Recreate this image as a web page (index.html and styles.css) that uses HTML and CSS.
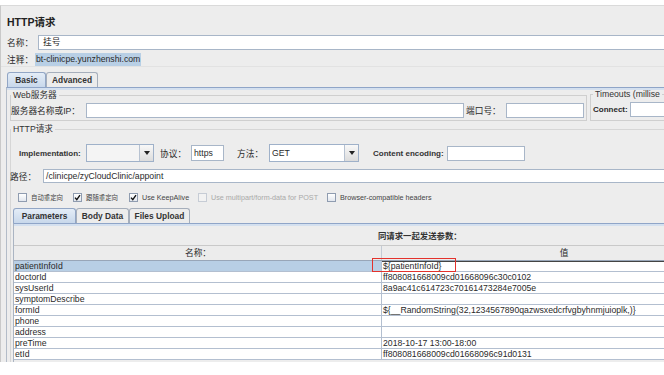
FILE: index.html
```html
<!DOCTYPE html>
<html lang="zh">
<head>
    <meta charset="UTF-8">
    <title>HTTP请求</title>
    <link rel="stylesheet" href="styles.css">
</head>
<body>
<div class="window">

    <div class="title">HTTP请求</div>

    <!-- Name / comment -->

    <div class="name-row">
        <span class="row-label">名称：</span>
        <div class="field name-field">挂号</div>
    </div>
    <div class="comment-row">
        <span class="row-label">注释：</span>
        <span class="selected-text">bt-clinicpe.yunzhenshi.com</span>
    </div>

    <!-- Tabs -->

    <div class="tabs">
        <div class="tab active basic-tab">Basic</div>
        <div class="tab advanced-tab">Advanced</div>
    </div>

    <div class="tab-panel">

        <div class="server-line">
            <fieldset class="group web-group">
                <legend>Web服务器</legend>
                <div class="server-row">
                    <span class="server-label">服务器名称或IP：</span>
                    <div class="field server-field"></div>
                    <span class="port-label">端口号：</span>
                    <div class="field port-field"></div>
                </div>
            </fieldset>

            <fieldset class="group timeout-group">
                <legend>Timeouts (millise</legend>
                <div class="server-row">
                    <span class="connect-label">Connect:</span>
                    <div class="field connect-field"></div>
                </div>
            </fieldset>
        </div>

        <fieldset class="group http-group">
            <legend>HTTP请求</legend>

            <div class="impl-row">
                <span class="bold-label impl-label">Implementation:</span>
                <div class="combo impl-combo">
                    <span class="combo-value"></span>
                    <span class="combo-button"><span class="arrow"></span></span>
                </div>
                <span class="proto-label">协议：</span>
                <div class="field proto-field">https</div>
                <span class="method-label">方法：</span>
                <div class="combo method-combo">
                    <span class="combo-value">GET</span>
                    <span class="combo-button"><span class="arrow"></span></span>
                </div>
                <span class="bold-label encoding-label">Content encoding:</span>
                <div class="field encoding-field"></div>
            </div>

            <div class="path-row">
                <span class="path-label">路径：</span>
                <div class="field path-field">/clinicpe/zyCloudClinic/appoint</div>
            </div>

            <!-- Options -->

            <div class="check-row">
                <div class="check check-1">
                    <span class="box"></span>
                    <span class="check-text cjk-small">自动重定向</span>
                </div>
                <div class="check check-2">
                    <span class="box"><svg width="7" height="7" viewBox="0 0 7 7"><path d="M1 3.6 L2.8 5.6 L6 1.2" fill="none" stroke="#111" stroke-width="1.4"/></svg></span>
                    <span class="check-text cjk-small">跟随重定向</span>
                </div>
                <div class="check check-3">
                    <span class="box"><svg width="7" height="7" viewBox="0 0 7 7"><path d="M1 3.6 L2.8 5.6 L6 1.2" fill="none" stroke="#111" stroke-width="1.4"/></svg></span>
                    <span class="check-text">Use KeepAlive</span>
                </div>
                <div class="check check-4 disabled">
                    <span class="box"></span>
                    <span class="check-text">Use multipart/form-data for POST</span>
                </div>
                <div class="check check-5">
                    <span class="box"></span>
                    <span class="check-text">Browser-compatible headers</span>
                </div>
            </div>

            <!-- Sub tabs -->

            <div class="tabs sub-tabs">
                <div class="tab active params-tab">Parameters</div>
                <div class="tab body-tab">Body Data</div>
                <div class="tab files-tab">Files Upload</div>
            </div>

            <div class="sub-panel">
                <div class="caption">同请求一起发送参数：</div>

                <div class="param-table">
                    <div class="param-head">
                        <div class="name-cell">名称：</div>
                        <div class="value-cell">值</div>
                    </div>
                    <div class="param-row selected">
                        <div class="name-cell">patientInfoId</div>
                        <div class="value-cell editing">${patientInfoId}</div>
                        <div class="mark"></div>
                    </div>
                    <div class="param-row">
                        <div class="name-cell">doctorId</div>
                        <div class="value-cell">ff808081668009cd01668096c30c0102</div>
                    </div>
                    <div class="param-row">
                        <div class="name-cell">sysUserId</div>
                        <div class="value-cell">8a9ac41c614723c70161473284e7005e</div>
                    </div>
                    <div class="param-row">
                        <div class="name-cell">symptomDescribe</div>
                        <div class="value-cell"></div>
                    </div>
                    <div class="param-row">
                        <div class="name-cell">formId</div>
                        <div class="value-cell">${__RandomString(32,1234567890qazwsxedcrfvgbyhnmjuioplk,)}</div>
                    </div>
                    <div class="param-row">
                        <div class="name-cell">phone</div>
                        <div class="value-cell"></div>
                    </div>
                    <div class="param-row">
                        <div class="name-cell">address</div>
                        <div class="value-cell"></div>
                    </div>
                    <div class="param-row">
                        <div class="name-cell">preTime</div>
                        <div class="value-cell">2018-10-17 13:00-18:00</div>
                    </div>
                    <div class="param-row">
                        <div class="name-cell">etId</div>
                        <div class="value-cell">ff808081668009cd01668096c91d0131</div>
                    </div>
                </div>
            </div>
        </fieldset>
    </div>
</div>
</body>
</html>
```

FILE: styles.css
```css
*{
    margin: 0;
    padding: 0;
    box-sizing: border-box;
}

body{
    width: 664px;
    height: 375px;
    overflow: hidden;
    background: #fff;
    font-family: "Liberation Sans", Arial, "Noto Sans CJK SC", sans-serif;
    font-size: 8.7px;
    color: #2a2a2a;
}

.window{
    margin-top: 5px;
    width: 800px;
    height: 357px;
    background: #ededed;
    border-top: 1px solid #dadada;
    border-left: 1px solid #c9c9c9;
    overflow: hidden;
}

.title{
    height: 28px;
    padding: 4px 0 0 6px;
    line-height: 24px;
    font-size: 10.5px;
    font-weight: bold;
    color: #222;
}

.field{
    height: 15px;
    background: #fff;
    border: 1px solid #a8b6c8;
    line-height: 13px;
    padding-left: 2px;
    white-space: nowrap;
    overflow: hidden;
}

/* name + comment */

.name-row{
    display: flex;
    align-items: center;
    margin-top: 1px;
    padding-left: 6px;
}

.row-label{
    width: 31px;
    flex-shrink: 0;
}

.name-field{
    flex: 1;
    padding-left: 4px;
}

.comment-row{
    display: flex;
    align-items: center;
    height: 14px;
    margin-top: 3px;
    padding-left: 6px;
    border-bottom: 1px solid #e2e2e2;
}

.comment-row .row-label{
    width: 28px;
}

.selected-text{
    background: #b8cfe5;
    height: 13px;
    line-height: 13px;
    padding: 0 1px;
}

/* tabs */

.tabs{
    display: flex;
    margin: 5px 0 0 6px;
    height: 15px;
}

.tab{
    height: 15px;
    border: 1px solid #a5aebb;
    border-bottom: none;
    border-radius: 3px 3px 0 0;
    background: #ececec;
    text-align: center;
    line-height: 14px;
    font-size: 8.4px;
    font-weight: bold;
    color: #333;
}

.tab.active{
    background: linear-gradient(#e4edf7, #c8d8eb);
    border-color: #92a6c5;
}

.basic-tab{ width: 39px; }
.advanced-tab{ width: 52px; }

.tab-panel{
    margin-left: 5px;
    height: 300px;
    border-top: 1px solid #8fa5c8;
    border-left: 1px solid #b3bcc8;
    box-shadow: inset 0 2px 0 #d4e0ef;
}

/* group boxes */

.group{
    border: 1px solid #cfcfcf;
    min-width: 0;
}

.group legend{
    margin-left: 0;
    padding: 0 2px;
    line-height: 10px;
    font-size: 8.7px;
    color: #333;
    white-space: nowrap;
}

.server-line{
    display: flex;
    margin-top: 2px;
}

.web-group{
    margin-left: 3px;
    width: 577px;
    height: 31px;
    flex-shrink: 0;
}

.server-row{
    display: flex;
    align-items: center;
    margin-top: 3px;
}

.server-label{
    width: 75px;
    flex-shrink: 0;
}

.server-field{
    width: 378px;
}

.port-label{
    width: 40px;
    margin-left: 2px;
}

.port-field{
    width: 78px;
}

.timeout-group{
    margin-left: 3px;
    margin-top: -1px;
    width: 200px;
    height: 32px;
    flex-shrink: 0;
}

.timeout-group legend{
    margin-left: 2px;
}

.connect-label{
    width: 39px;
    padding-left: 2px;
    font-weight: bold;
    font-size: 8px;
    white-space: nowrap;
    flex-shrink: 0;
}

.connect-field{
    width: 60px;
}

.http-group{
    margin: 3px 0 0 3px;
    width: 780px;
    height: 260px;
    border-color: #d6d6d6;
}

.bold-label{
    font-weight: bold;
    font-size: 8px;
    color: #333;
    white-space: nowrap;
}

/* implementation row */

.impl-row{
    display: flex;
    align-items: center;
    height: 18px;
    margin-top: 10px;
    padding-left: 8px;
}

.impl-label{ width: 67px; }

.combo{
    display: flex;
    height: 18px;
    border: 1px solid #9fb1c9;
    background: #fff;
}

.impl-combo{
    width: 68px;
    background: #f4f4f4;
}

.method-combo{ width: 90px; }

.combo-value{
    flex: 1;
    line-height: 16px;
    padding-left: 2px;
}

.combo-button{
    width: 14px;
    border-left: 1px solid #b7c2d1;
    background: linear-gradient(#f8f8f8, #dcdcdc);
    display: flex;
    align-items: center;
    justify-content: center;
}

.arrow{
    width: 0;
    height: 0;
    border-left: 3.5px solid transparent;
    border-right: 3.5px solid transparent;
    border-top: 4px solid #222;
}

.proto-label{
    width: 31px;
    margin-left: 6px;
}

.proto-field{
    width: 33px;
    height: 16px;
    line-height: 14px;
}

.method-label{
    width: 32px;
    margin-left: 13px;
}

.encoding-label{
    width: 74px;
    margin-left: 14px;
}

.encoding-field{
    width: 78px;
}

/* path */

.path-row{
    display: flex;
    align-items: center;
    margin-top: 7px;
}

.path-label{
    width: 33px;
    margin-left: -1px;
}

.path-field{
    flex: 1;
    height: 14px;
    line-height: 12px;
}

/* checkboxes */

.check-row{
    display: flex;
    align-items: center;
    height: 12px;
    margin-top: 8px;
    padding-left: 7px;
}

.check{
    display: flex;
    align-items: center;
    gap: 4px;
    flex-shrink: 0;
}

.check-1{ width: 55px; }
.check-2{ width: 56px; }
.check-3{ width: 69px; }
.check-4{ width: 129px; }

.box{
    width: 9px;
    height: 9px;
    border: 1px solid #8f9cb0;
    background: linear-gradient(#ffffff, #e2e7ee);
    display: flex;
    align-items: center;
    justify-content: center;
}

.check-text{
    font-size: 7.2px;
    color: #444;
    white-space: nowrap;
}

.cjk-small{
    font-size: 6.4px;
}

.disabled .box{
    border-color: #c6ccd5;
    background: #f2f2f2;
}

.disabled .check-text{
    color: #a9a9a9;
}

/* sub tabs */

.sub-tabs{
    margin: 5px 0 0 2px;
}

.params-tab{ width: 63px; }
.body-tab{ width: 53px; }
.files-tab{ width: 61px; }

.sub-panel{
    margin-left: 2px;
    height: 150px;
    border-top: 1px solid #8fa5c8;
    border-left: 1px solid #aab4c2;
    box-shadow: inset 0 2px 0 #d4e0ef;
}

.caption{
    margin-top: 6px;
    padding-left: 364px;
    line-height: 12px;
    font-weight: bold;
    font-size: 8.4px;
    color: #333;
}

/* parameter table */

.param-table{
    margin-top: 3px;
    width: 732px;
}

.param-head{
    display: flex;
    height: 16px;
    border-top: 1px solid #c9c9c9;
    border-bottom: 1px solid #98a6b8;
    background: #ececec;
    line-height: 14px;
    text-align: center;
}

.param-head .name-cell{
    border-right: 1px solid #c4cbd5;
}

.param-row{
    position: relative;
    display: flex;
    height: 11px;
    border-bottom: 1px solid #b3bfd0;
    background: #fff;
    line-height: 10px;
    white-space: nowrap;
}

.name-cell{
    width: 368px;
    flex-shrink: 0;
    padding-left: 1px;
}

.param-row .name-cell{
    border-right: 1px solid #b3bfd0;
}

.value-cell{
    flex: 1;
    padding-left: 1px;
    overflow: hidden;
}

.param-head .value-cell{
    padding-left: 0;
}

.selected .name-cell{
    background: #b8cfe5;
}

.value-cell.editing{
    border-top: 1px solid #444;
    line-height: 9px;
}

.mark{
    position: absolute;
    left: 358px;
    top: -3px;
    width: 84px;
    height: 14px;
    border: 1.5px solid #e3322c;
}
```
